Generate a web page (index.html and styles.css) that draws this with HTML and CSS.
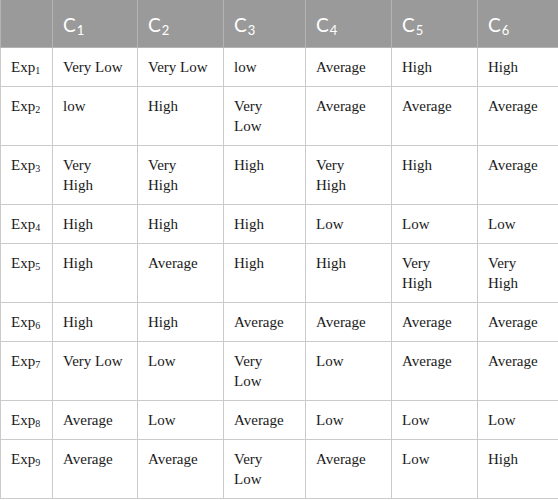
FILE: index.html
```html
<!DOCTYPE html>
<html>
<head>
<meta charset="utf-8">
<link rel="stylesheet" href="styles.css">
</head>
<body>
<table class="grid">
  <colgroup>
    <col class="w0"><col class="w1"><col class="w2"><col class="w3"><col class="w4"><col class="w5"><col class="w6">
  </colgroup>
  <thead>
    <tr>
      <th></th>
      <th>C<sub>1</sub></th>
      <th>C<sub>2</sub></th>
      <th>C<sub>3</sub></th>
      <th>C<sub>4</sub></th>
      <th>C<sub>5</sub></th>
      <th>C<sub>6</sub></th>
    </tr>
  </thead>
  <tbody>
    <tr><td>Exp<sub>1</sub></td><td>Very Low</td><td>Very Low</td><td>low</td><td>Average</td><td>High</td><td>High</td></tr>
    <tr><td>Exp<sub>2</sub></td><td>low</td><td>High</td><td>Very<br>Low</td><td>Average</td><td>Average</td><td>Average</td></tr>
    <tr><td>Exp<sub>3</sub></td><td>Very<br>High</td><td>Very<br>High</td><td>High</td><td>Very<br>High</td><td>High</td><td>Average</td></tr>
    <tr><td>Exp<sub>4</sub></td><td>High</td><td>High</td><td>High</td><td>Low</td><td>Low</td><td>Low</td></tr>
    <tr><td>Exp<sub>5</sub></td><td>High</td><td>Average</td><td>High</td><td>High</td><td>Very<br>High</td><td>Very<br>High</td></tr>
    <tr><td>Exp<sub>6</sub></td><td>High</td><td>High</td><td>Average</td><td>Average</td><td>Average</td><td>Average</td></tr>
    <tr><td>Exp<sub>7</sub></td><td>Very Low</td><td>Low</td><td>Very<br>Low</td><td>Low</td><td>Average</td><td>Average</td></tr>
    <tr><td>Exp<sub>8</sub></td><td>Average</td><td>Low</td><td>Average</td><td>Low</td><td>Low</td><td>Low</td></tr>
    <tr><td>Exp<sub>9</sub></td><td>Average</td><td>Average</td><td>Very<br>Low</td><td>Average</td><td>Low</td><td>High</td></tr>
  </tbody>
</table>
</body>
</html>
```
FILE: styles.css
```css
html, body {
  margin: 0;
  padding: 0;
  background: #ffffff;
}
.grid {
  border-collapse: collapse;
  table-layout: fixed;
  width: 558px;
}
.w0 { width: 52px; }
.w1 { width: 85px; }
.w2 { width: 86px; }
.w3 { width: 82px; }
.w4 { width: 86px; }
.w5 { width: 86px; }
.w6 { width: 81px; }
.grid th {
  background: #9a9a9a;
  color: #ffffff;
  font-family: Lato, "Open Sans", sans-serif;
  font-weight: normal;
  font-size: 19px;
  line-height: 24px;
  text-align: left;
  padding: 13px 10px 10px 10px;
  border: 1px solid #b4b4b4;
  border-top: none;
  white-space: nowrap;
}
.grid th sub {
  font-size: 13px;
  line-height: 0;
  vertical-align: -3px;
  margin-left: 1px;
}
.grid td {
  font-family: "Liberation Serif", "Times New Roman", serif;
  font-size: 15px;
  line-height: 20px;
  color: #1a1a1a;
  text-align: left;
  vertical-align: top;
  padding: 9px 10px 9px 10px;
  border: 1px solid #cbcbcb;
  white-space: nowrap;
}
.grid td sub {
  font-size: 10px;
  line-height: 0;
  vertical-align: -2px;
}
```
